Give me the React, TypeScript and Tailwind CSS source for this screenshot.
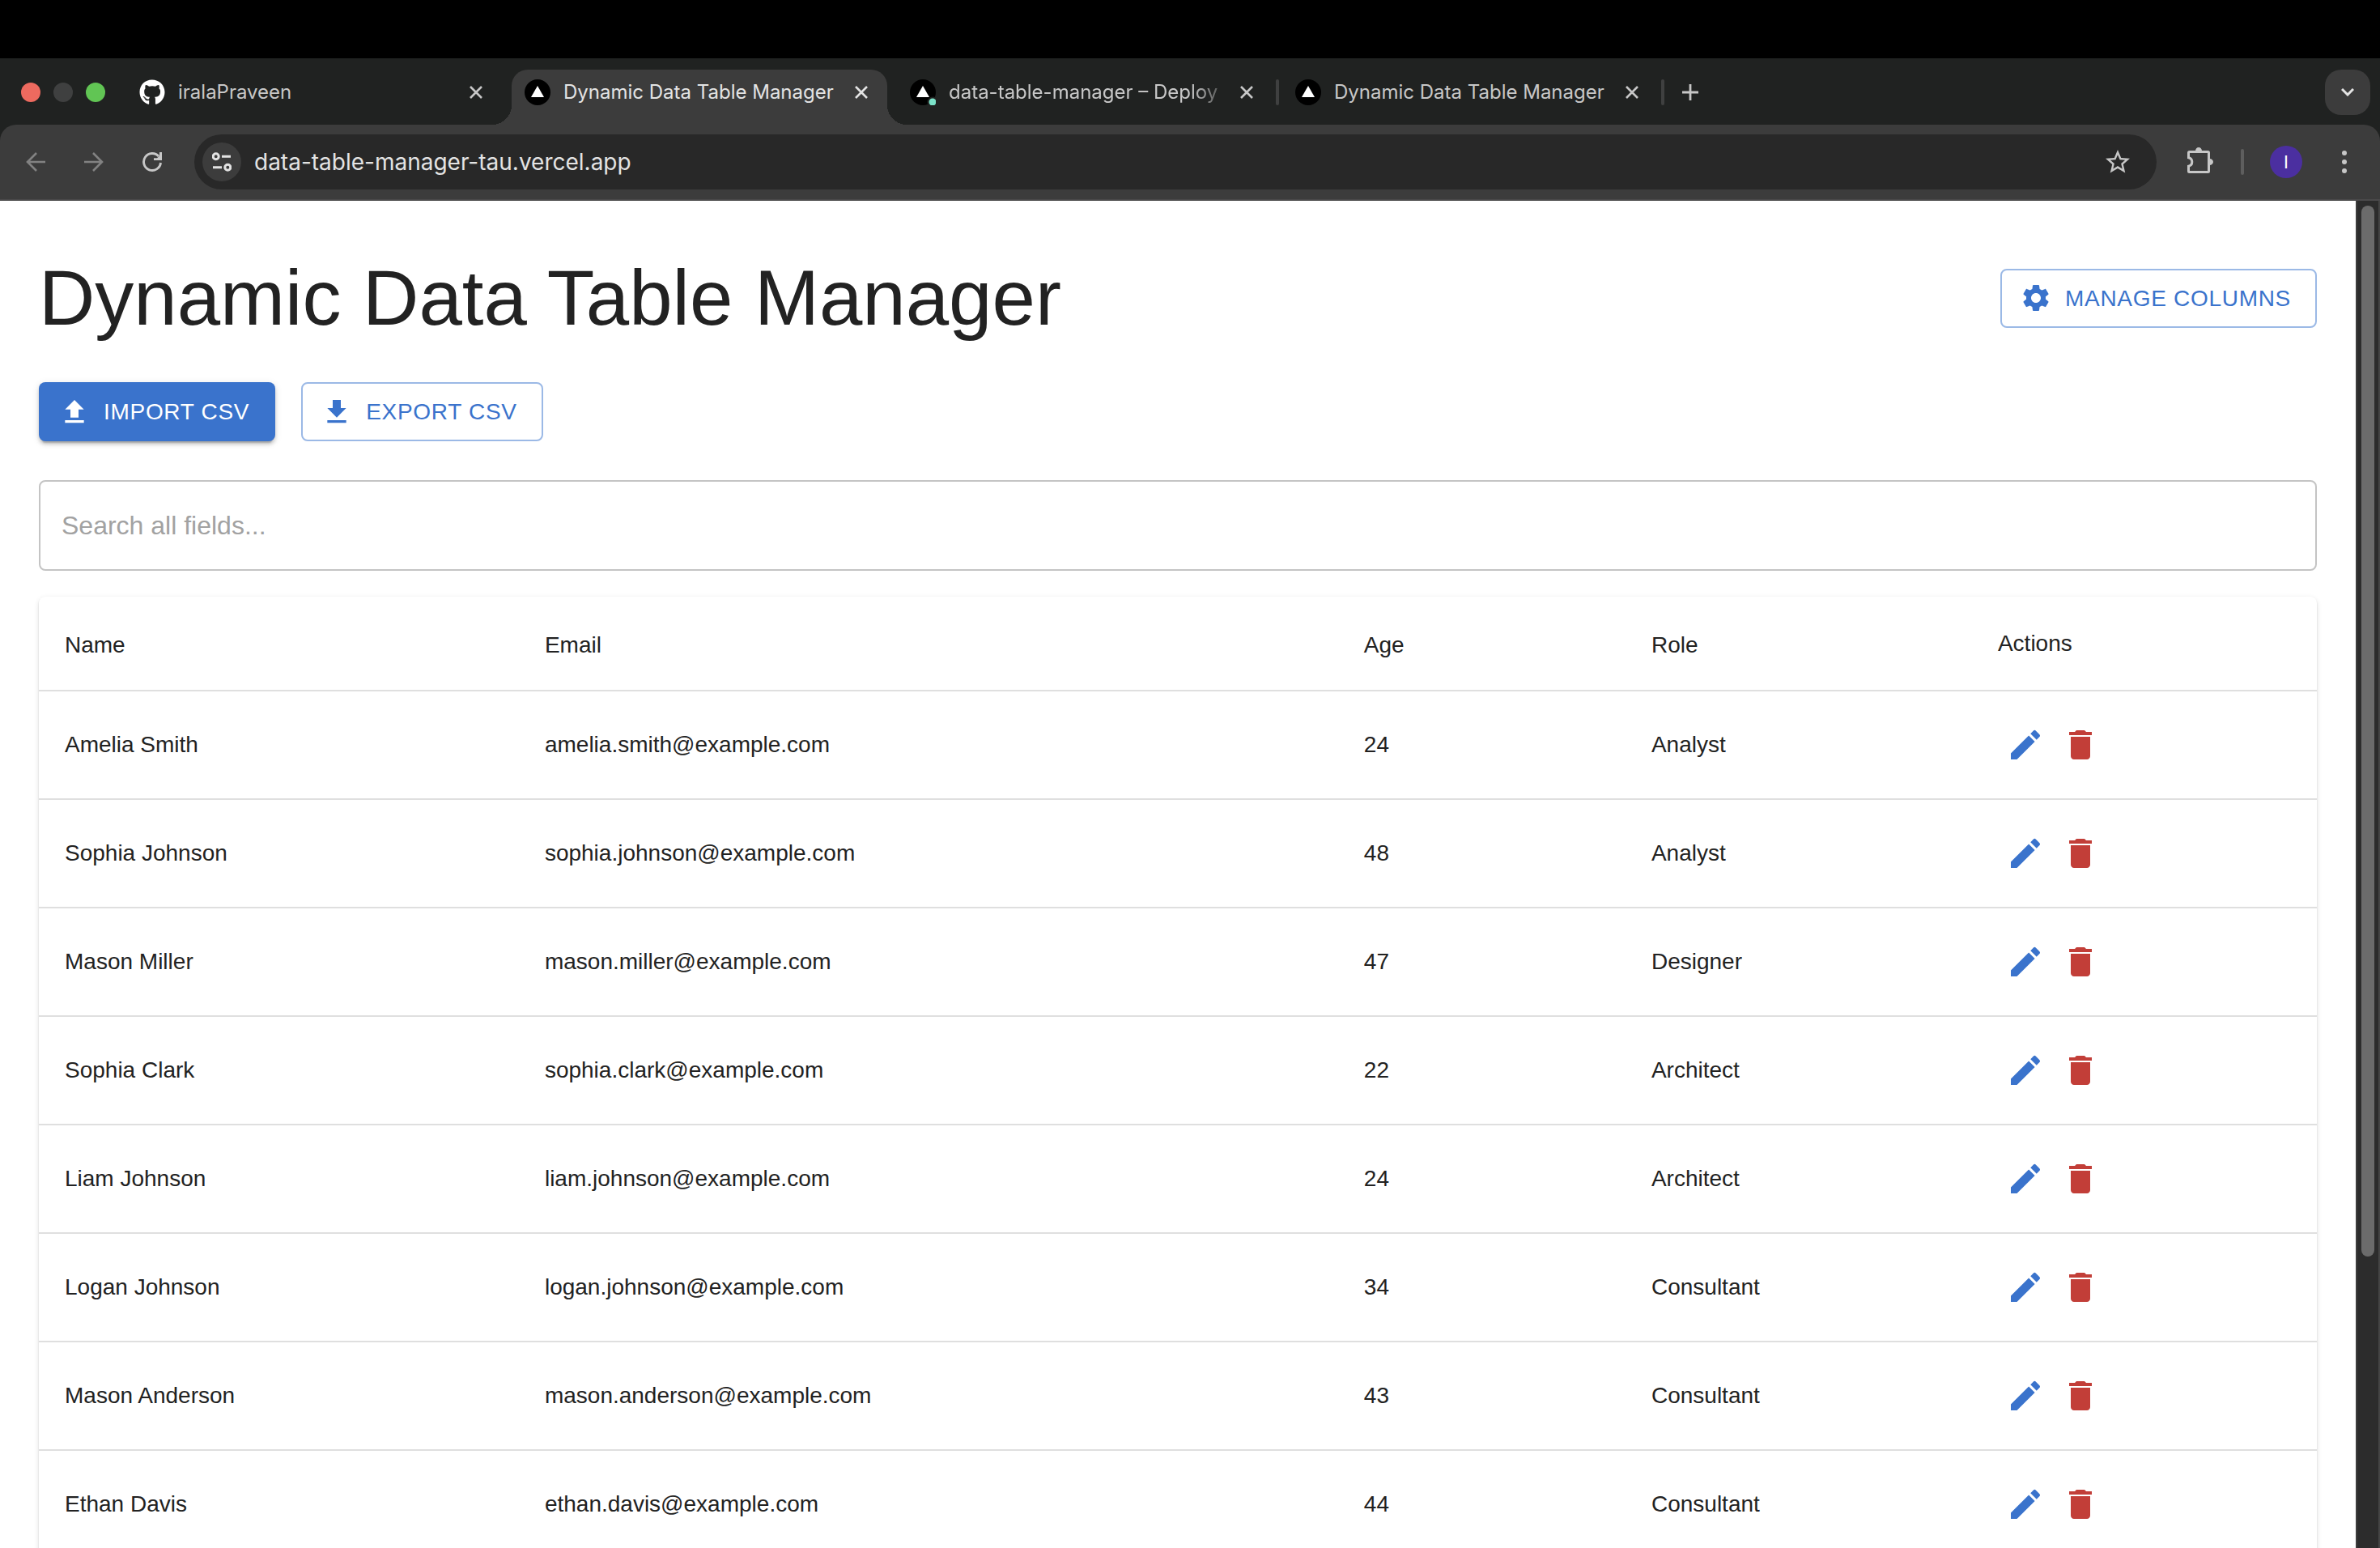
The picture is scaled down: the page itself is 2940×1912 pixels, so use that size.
import React from "react";
import { FaGithub } from "react-icons/fa";
import { MdStarOutline } from "react-icons/md";

type Person = { name: string; email: string; age: number; role: string };

const people: Person[] = [
  { name: "Amelia Smith", email: "amelia.smith@example.com", age: 24, role: "Analyst" },
  { name: "Sophia Johnson", email: "sophia.johnson@example.com", age: 48, role: "Analyst" },
  { name: "Mason Miller", email: "mason.miller@example.com", age: 47, role: "Designer" },
  { name: "Sophia Clark", email: "sophia.clark@example.com", age: 22, role: "Architect" },
  { name: "Liam Johnson", email: "liam.johnson@example.com", age: 24, role: "Architect" },
  { name: "Logan Johnson", email: "logan.johnson@example.com", age: 34, role: "Consultant" },
  { name: "Mason Anderson", email: "mason.anderson@example.com", age: 43, role: "Consultant" },
  { name: "Ethan Davis", email: "ethan.davis@example.com", age: 44, role: "Consultant" },
];

const ICON_PATHS = {
  upload: "M5 20h14v-2H5v2zm0-10h4v6h6v-6h4l-7-7-7 7z",
  download: "M5 20h14v-2H5v2zM19 9h-4V3H9v6H5l7 7 7-7z",
  edit: "M3 17.25V21h3.75L17.81 9.94l-3.75-3.75L3 17.25zM20.71 7.04c.39-.39.39-1.02 0-1.41l-2.34-2.34a.9959.9959 0 0 0-1.41 0l-1.83 1.83 3.75 3.75 1.83-1.83z",
  trash: "M6 19c0 1.1.9 2 2 2h8c1.1 0 2-.9 2-2V7H6v12zM19 4h-3.5l-1-1h-5l-1 1H5v2h14V4z",
  gear: "M19.14 12.94c.04-.3.06-.61.06-.94 0-.32-.02-.64-.07-.94l2.03-1.58c.18-.14.23-.41.12-.61l-1.92-3.32c-.12-.22-.37-.29-.59-.22l-2.39.96c-.5-.38-1.03-.7-1.62-.94l-.36-2.54c-.04-.24-.24-.41-.48-.41h-3.84c-.24 0-.43.17-.47.41l-.36 2.54c-.59.24-1.13.57-1.62.94l-2.39-.96c-.22-.08-.47 0-.59.22L2.74 8.87c-.12.21-.08.47.12.61l2.03 1.58c-.05.3-.09.63-.09.94s.02.64.07.94l-2.03 1.58c-.18.14-.23.41-.12.61l1.92 3.32c.12.22.37.29.59.22l2.39-.96c.5.38 1.03.7 1.62.94l.36 2.54c.05.24.24.41.48.41h3.84c.24 0 .44-.17.47-.41l.36-2.54c.59-.24 1.13-.56 1.62-.94l2.39.96c.22.08.47 0 .59-.22l1.92-3.32c.12-.22.07-.47-.12-.61l-2.01-1.58zM12 15.6c-1.98 0-3.6-1.62-3.6-3.6s1.62-3.6 3.6-3.6 3.6 1.62 3.6 3.6-1.62 3.6-3.6 3.6z",
};

function Icon({ name, className }: { name: keyof typeof ICON_PATHS; className: string }) {
  return (
    <svg viewBox="0 0 24 24" fill="currentColor" aria-hidden="true" className={className}>
      <path d={ICON_PATHS[name]} />
    </svg>
  );
}

function VercelMark({ live = false }: { live?: boolean }) {
  return (
    <svg viewBox="0 0 32 32" aria-hidden="true" className="size-8 shrink-0">
      <circle cx="16" cy="16" r="16" fill="#000" />
      <path d="M16 8l8 14H8z" fill="#fff" />
      {live && <circle cx="28" cy="28" r="6.5" fill="#202221" />}
      {live && <circle cx="28" cy="28" r="4.5" fill="#7be3c9" />}
    </svg>
  );
}

function CloseButton({ label }: { label: string }) {
  return (
    <button type="button" aria-label={label} className="flex size-8 shrink-0 items-center justify-center">
      <svg viewBox="0 0 16 16" aria-hidden="true" className="size-4" fill="none" stroke="currentColor" strokeWidth="2.6">
        <path d="M1 1l14 14M15 1L1 15" />
      </svg>
    </button>
  );
}

type TabProps = {
  title: string;
  icon: React.ReactNode;
  active?: boolean;
  faded?: boolean;
  divider?: boolean;
};

function Tab({ title, icon, active, faded, divider }: TabProps) {
  return (
    <div className="relative flex h-full w-[476px] min-w-0 pr-3">
      <div
        className={
          active
            ? "relative flex w-full items-center rounded-t-[20px] bg-[#3c3c3c] pr-4 pb-3 pl-4 text-[#e3e3e3]"
            : "flex w-full items-center pr-4 pb-3 pl-4 text-[#c7c7c7]"
        }
      >
        {active && (
          <span className="absolute right-full bottom-0 size-6 bg-[radial-gradient(circle_at_0_0,transparent_24px,#3c3c3c_24px)]" />
        )}
        {active && (
          <span className="absolute bottom-0 left-full size-6 bg-[radial-gradient(circle_at_100%_0,transparent_24px,#3c3c3c_24px)]" />
        )}
        {icon}
        <span
          className={
            faded
              ? "ml-4 min-w-0 flex-1 whitespace-nowrap mask-r-from-85%"
              : "ml-4 min-w-0 flex-1 whitespace-nowrap"
          }
        >
          {title}
        </span>
        <CloseButton label={`Close ${title}`} />
      </div>
      {divider && <span className="absolute top-3 right-1 h-8 w-1 rounded-full bg-[#3f4040]" />}
    </div>
  );
}

function TabStrip() {
  return (
    <div className="flex h-[82px] items-stretch bg-[#202221] pt-[14px] pr-3 text-[24px] leading-8">
      <div className="flex w-[156px] shrink-0 items-center gap-4 pb-3 pl-[26px]">
        <span className="size-6 rounded-full bg-[#ed6a5f]" />
        <span className="size-6 rounded-full bg-[#3f4040]" />
        <span className="size-6 rounded-full bg-[#61c554]" />
      </div>
      <Tab title="iralaPraveen" icon={<FaGithub className="size-8 shrink-0 text-white" />} />
      <Tab title="Dynamic Data Table Manager" icon={<VercelMark />} active />
      <Tab title="data-table-manager – Deploy" icon={<VercelMark live />} faded divider />
      <Tab title="Dynamic Data Table Manager" icon={<VercelMark />} divider />
      <button type="button" aria-label="New tab" className="flex h-14 w-14 shrink-0 items-center justify-center text-[#c7c7c7]">
        <svg viewBox="0 0 20 20" className="size-5" fill="none" stroke="currentColor" strokeWidth="2.8">
          <path d="M10 0v20M0 10h20" />
        </svg>
      </button>
      <button
        type="button"
        aria-label="Search tabs"
        className="ml-auto flex size-14 shrink-0 items-center justify-center rounded-[20px] bg-[#3c3c3c] text-[#e3e3e3]"
      >
        <svg viewBox="0 0 16 10" className="h-[10px] w-4" fill="none" stroke="currentColor" strokeWidth="3">
          <path d="M1 1l7 7 7-7" />
        </svg>
      </button>
    </div>
  );
}

function Toolbar() {
  return (
    <div className="bg-[#202221]">
      <div className="flex h-[94px] items-center rounded-t-[20px] border-b-2 border-[#4a494a] bg-[#3c3c3c] pr-4 pl-2 text-[#c7c7c7]">
        <button type="button" aria-label="Back" className="flex h-14 w-[72px] items-center justify-center text-[#828282]">
          <svg viewBox="0 0 24 24" className="size-6" fill="none" stroke="currentColor" strokeWidth="2.6">
            <path d="M13 1L2 12l11 11M2 12h22" />
          </svg>
        </button>
        <button type="button" aria-label="Forward" className="flex h-14 w-[72px] items-center justify-center text-[#828282]">
          <svg viewBox="0 0 24 24" className="size-6" fill="none" stroke="currentColor" strokeWidth="2.6">
            <path d="M11 1l11 11-11 11M22 12H0" />
          </svg>
        </button>
        <button type="button" aria-label="Reload" className="flex h-14 w-[72px] items-center justify-center">
          <svg viewBox="0 0 24 24" className="size-6" fill="none" stroke="currentColor" strokeWidth="2.9">
            <path d="M22.5 13A10.5 10.5 0 1 1 20 5.100" />
            <path d="M24 0v10H14V7.200h4L21 4.500V0z" fill="currentColor" stroke="none" />
          </svg>
        </button>
        <div className="ml-4 flex h-[68px] min-w-0 flex-1 items-center rounded-full bg-[#282828] pr-6 pl-[10px]">
          <button
            type="button"
            aria-label="View site information"
            className="flex size-12 shrink-0 items-center justify-center rounded-full bg-[#3c3c3c] text-[#e3e3e3]"
          >
            <svg viewBox="0 0 24 24" className="size-6" fill="none" stroke="currentColor" strokeWidth="3">
              <circle cx="4.7" cy="5.3" r="3.5" />
              <circle cx="19.3" cy="18.7" r="3.5" />
              <path d="M12 5.3h11M1 18.7h11" />
            </svg>
          </button>
          <input
            type="text"
            aria-label="Address"
            defaultValue="data-table-manager-tau.vercel.app"
            className="ml-4 min-w-0 flex-1 bg-transparent text-[28px] leading-10 text-[#e3e3e3] outline-none"
          />
          <button type="button" aria-label="Bookmark this tab" className="flex size-12 shrink-0 items-center justify-center">
            <MdStarOutline className="size-9" />
          </button>
        </div>
        <button type="button" aria-label="Extensions" className="ml-[26px] flex size-14 shrink-0 items-center justify-center">
          <svg viewBox="0 0 32 36" className="h-9 w-8" fill="none" stroke="currentColor" strokeWidth="3">
            <path d="M2.500 5.500h23a1 1 0 0 1 1 1v23a1 1 0 0 1-1 1h-23a1 1 0 0 1-1-1V23.200a5.300 5.300 0 0 0 0-10.400V6.500a1 1 0 0 1 1-1z" />
            <path d="M10 4.500a4 4.500 0 0 1 8 0zM27.500 14a4.500 4 0 0 1 0 8z" fill="currentColor" stroke="none" />
          </svg>
        </button>
        <span className="ml-[22px] h-8 w-1 shrink-0 rounded-full bg-[#5e5e5e]" />
        <button type="button" aria-label="Profile" className="ml-6 flex size-14 shrink-0 items-center justify-center">
          <span className="flex size-10 items-center justify-center rounded-full bg-[#4b2fa0] text-[22px] leading-8 text-white">I</span>
        </button>
        <button type="button" aria-label="Browser menu" className="ml-4 flex size-14 shrink-0 items-center justify-center">
          <svg viewBox="0 0 6 28" className="h-7 w-[6px]" fill="currentColor">
            <circle cx="3" cy="3" r="3" />
            <circle cx="3" cy="14" r="3" />
            <circle cx="3" cy="25" r="3" />
          </svg>
        </button>
      </div>
    </div>
  );
}

function ActionButton({
  icon,
  children,
  filled,
}: {
  icon: keyof typeof ICON_PATHS;
  children: React.ReactNode;
  filled?: boolean;
}) {
  return (
    <button
      type="button"
      className={
        filled
          ? "flex h-[73px] items-center rounded-lg bg-[#3a73cc] pr-8 pl-6 text-[28px] leading-[49px] tracking-wide text-white uppercase shadow-[0_6px_2px_-4px_rgba(0,0,0,0.2),0_4px_4px_0_rgba(0,0,0,0.14),0_2px_10px_0_rgba(0,0,0,0.12)]"
          : "flex h-[73px] items-center rounded-lg border-2 border-[#9bb9e6] pr-[30px] pl-[22px] text-[28px] leading-[49px] tracking-wide text-[#3a73cc] uppercase"
      }
    >
      <Icon name={icon} className="mr-4 size-10" />
      {children}
    </button>
  );
}

const headings = ["Name", "Email", "Age", "Role"];

function Cell({ children }: { children: React.ReactNode }) {
  return <td className="border-b-2 border-[#dfdfdf] px-8">{children}</td>;
}

function PeopleTable() {
  return (
    <div className="mt-8 rounded-lg bg-white shadow-[0_4px_2px_-2px_rgba(0,0,0,0.2),0_2px_2px_0_rgba(0,0,0,0.14),0_2px_6px_0_rgba(0,0,0,0.12)]">
      <table className="w-full table-fixed border-separate border-spacing-0 text-left text-[28px] leading-10">
        <colgroup>
          <col className="w-[21.07%]" />
          <col className="w-[35.96%]" />
          <col className="w-[12.62%]" />
          <col className="w-[15.21%]" />
          <col />
        </colgroup>
        <thead>
          <tr className="h-[117px]">
            {headings.map((h) => (
              <th key={h} scope="col" className="border-b-2 border-[#dfdfdf] px-8 pt-1 font-normal">
                {h}
              </th>
            ))}
            <th scope="col" className="border-b-2 border-[#dfdfdf] px-8 font-normal">
              Actions
            </th>
          </tr>
        </thead>
        <tbody>
          {people.map((p) => (
            <tr key={p.email} className="h-[134px]">
              <Cell>{p.name}</Cell>
              <Cell>{p.email}</Cell>
              <Cell>{p.age}</Cell>
              <Cell>{p.role}</Cell>
              <Cell>
                <div className="flex">
                  <button type="button" aria-label={`Edit ${p.name}`} className="p-[10px] text-[#3a73cc]">
                    <Icon name="edit" className="size-12" />
                  </button>
                  <button type="button" aria-label={`Delete ${p.name}`} className="p-[10px] text-[#c23e38]">
                    <Icon name="trash" className="size-12" />
                  </button>
                </div>
              </Cell>
            </tr>
          ))}
        </tbody>
      </table>
    </div>
  );
}

export default function App() {
  return (
    <div className="flex h-screen flex-col overflow-hidden bg-white">
      <div className="h-[72px] shrink-0 bg-black" />
      <header className="shrink-0 font-['Inter',sans-serif]">
        <TabStrip />
        <Toolbar />
      </header>
      <div className="flex min-h-0 flex-1">
        <main className="min-w-0 flex-1 overflow-hidden px-12 pt-16 font-['Liberation_Sans',Arial,sans-serif] text-[#222222]">
          <div className="flex items-center justify-between">
            <h1 className="text-[96px] leading-[112px]">Dynamic Data Table Manager</h1>
            <ActionButton icon="gear">Manage Columns</ActionButton>
          </div>
          <div className="mt-12 flex gap-8">
            <ActionButton icon="upload" filled>
              Import CSV
            </ActionButton>
            <ActionButton icon="download">Export CSV</ActionButton>
          </div>
          <input
            type="search"
            aria-label="Search all fields"
            placeholder="Search all fields..."
            className="mt-12 block h-28 w-full rounded-lg border-2 border-[#c4c4c4] px-[26px] text-[32px] leading-[46px] outline-none placeholder:text-[#a2a2a2]"
          />
          <PeopleTable />
        </main>
        <div className="w-[30px] shrink-0 border-r-2 border-l-2 border-r-[#444444] border-l-[#3e3e3e] bg-[#2c2c2c] px-[5px] pt-[6px]">
          <div className="h-[78.3%] w-4 rounded-full bg-[#6b6b6b]" />
        </div>
      </div>
    </div>
  );
}
